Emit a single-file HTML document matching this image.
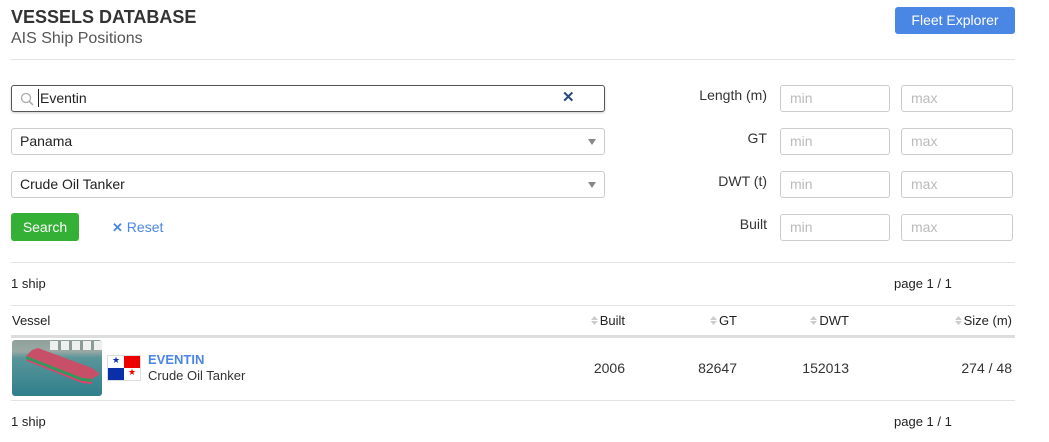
<!DOCTYPE html>
<html><head><meta charset="utf-8"><style>
*{box-sizing:border-box;margin:0;padding:0}
body{width:1049px;height:442px;background:#fff;font-family:"Liberation Sans",sans-serif;color:#333;position:relative;overflow:hidden}
.a{position:absolute}
.hr{position:absolute;left:11px;width:1004px;height:1px;background:#e3e3e3}
.inp{position:absolute;border:1px solid #ccc;border-radius:3px;background:#fff;font-size:14px;color:#bbb;padding-left:9px;line-height:24px}
.sel{position:absolute;left:11px;width:594px;height:27px;border:1px solid #ccc;border-radius:3px;font-size:14px;color:#222;padding-left:8px;line-height:25px}
.sel:after{content:"";position:absolute;right:8px;top:10px;border-left:4px solid transparent;border-right:4px solid transparent;border-top:6px solid #888}
.lbl{position:absolute;right:282px;font-size:14px;color:#333;text-align:right}
.t13{font-size:13px;color:#222}
.num{position:absolute;top:360px;font-size:14px;color:#333;text-align:right}
.th{position:absolute;top:313px;font-size:13px;color:#222;text-align:right}
.th svg{margin-right:2px;vertical-align:0px}
</style></head><body>
<div class="a" style="left:11px;top:7px;font-size:18px;font-weight:bold;color:#333">VESSELS DATABASE</div>
<div class="a" style="left:11px;top:30px;font-size:16px;color:#555">AIS Ship Positions</div>
<div class="a" style="left:895px;top:7px;width:120px;height:27px;background:#4a86e3;border-radius:3px;color:#fff;font-size:14px;text-align:center;line-height:26px">Fleet Explorer</div>
<div class="hr" style="top:59px"></div>

<div class="a" style="left:11px;top:85px;width:594px;height:27px;border:1px solid #555;border-radius:3px;box-shadow:0 1px 2px rgba(0,0,0,.2)">
<svg class="a" style="left:8px;top:6px" width="14" height="14" viewBox="0 0 14 14"><circle cx="6" cy="6" r="4.5" fill="none" stroke="#aaa" stroke-width="1.3"/><line x1="9.3" y1="9.3" x2="13" y2="13" stroke="#aaa" stroke-width="1.5"/></svg>
<div class="a" style="left:27px;top:3px;font-size:14px;color:#222;border-left:1px solid #222;line-height:18px;padding-left:1px;margin-left:-1px">Eventin</div>
<div class="a" style="left:550px;top:2px;font-size:15px;font-weight:bold;color:#2c4a7a">✕</div>
</div>
<div class="sel" style="top:128px">Panama</div>
<div class="sel" style="top:171px">Crude Oil Tanker</div>
<div class="a" style="left:11px;top:213px;width:68px;height:28px;background:#33b035;border-radius:3px;color:#fff;font-size:14px;text-align:center;line-height:28px">Search</div>
<div class="a" style="left:112px;top:219px;font-size:14px;color:#4a86e3"><b style="font-size:13px">✕</b> Reset</div>

<div class="lbl" style="top:87px">Length (m)</div>
<div class="lbl" style="top:130px">GT</div>
<div class="lbl" style="top:173px">DWT (t)</div>
<div class="lbl" style="top:216px">Built</div>
<div class="inp" style="left:780px;top:85px;width:110px;height:27px">min</div>
<div class="inp" style="left:901px;top:85px;width:112px;height:27px">max</div>
<div class="inp" style="left:780px;top:128px;width:110px;height:27px">min</div>
<div class="inp" style="left:901px;top:128px;width:112px;height:27px">max</div>
<div class="inp" style="left:780px;top:171px;width:110px;height:27px">min</div>
<div class="inp" style="left:901px;top:171px;width:112px;height:27px">max</div>
<div class="inp" style="left:780px;top:214px;width:110px;height:27px">min</div>
<div class="inp" style="left:901px;top:214px;width:112px;height:27px">max</div>

<div class="hr" style="top:262px"></div>
<div class="a t13" style="left:11px;top:276px">1 ship</div>
<div class="a t13" style="left:894px;top:276px">page 1 / 1</div>
<div class="hr" style="top:305px"></div>
<div class="a t13" style="left:12px;top:313px">Vessel</div>
<div class="th" style="right:424px"><svg width="7" height="9" viewBox="0 0 7 9"><path d="M0 4L3.5 0L7 4ZM0 5L3.5 9L7 5Z" fill="#ccc"/></svg>Built</div>
<div class="th" style="right:312px"><svg width="7" height="9" viewBox="0 0 7 9"><path d="M0 4L3.5 0L7 4ZM0 5L3.5 9L7 5Z" fill="#ccc"/></svg>GT</div>
<div class="th" style="right:200px"><svg width="7" height="9" viewBox="0 0 7 9"><path d="M0 4L3.5 0L7 4ZM0 5L3.5 9L7 5Z" fill="#ccc"/></svg>DWT</div>
<div class="th" style="right:37px"><svg width="7" height="9" viewBox="0 0 7 9"><path d="M0 4L3.5 0L7 4ZM0 5L3.5 9L7 5Z" fill="#ccc"/></svg>Size (m)</div>
<div class="hr" style="top:335px;height:3px;background:#ddd"></div>

<div class="a" style="left:12px;top:340px;width:90px;height:56px;border-radius:3px;overflow:hidden;background:linear-gradient(180deg,#8fa09a 0%,#9aa9a4 20%,#5a9599 32%,#2f7f8c 100%)">
<div class="a" style="left:38px;top:1px;width:52px;height:9px;background:repeating-linear-gradient(90deg,#eef0f0 0 8px,#8a9a95 8px 11px)"></div>
<svg class="a" style="left:0;top:0" width="90" height="56" viewBox="0 0 90 56"><path d="M20 10L26 8L80 28L88 34L80 39L70 38L14 16Z" fill="#c75068"/><path d="M14 16L70 38L80 39L80 42L70 41L14 19Z" fill="#2f9a5a"/><path d="M14 19L70 41L80 42L80 44L70 43L15 21Z" fill="#e04070"/></svg>
</div>
<div class="a" style="left:107px;top:355px;width:34px;height:26px;border:1px solid #ddd;background:#fff">
<div class="a" style="left:16px;top:0;width:16px;height:12px;background:#e00"></div>
<div class="a" style="left:0;top:12px;width:16px;height:12px;background:#0a2fa8"></div>
<div class="a" style="left:4px;top:-1px;font-size:9px;color:#0a2fa8">★</div>
<div class="a" style="left:20px;top:11px;font-size:9px;color:#e00">★</div>
</div>
<div class="a" style="left:148px;top:352px;font-size:13px;font-weight:bold;color:#4a86e3">EVENTIN</div>
<div class="a" style="left:148px;top:368px;font-size:13px;color:#333">Crude Oil Tanker</div>
<div class="num" style="right:424px">2006</div>
<div class="num" style="right:312px">82647</div>
<div class="num" style="right:200px">152013</div>
<div class="num" style="right:37px">274 / 48</div>
<div class="hr" style="top:400px"></div>
<div class="a t13" style="left:11px;top:414px">1 ship</div>
<div class="a t13" style="left:894px;top:414px">page 1 / 1</div>
</body></html>
